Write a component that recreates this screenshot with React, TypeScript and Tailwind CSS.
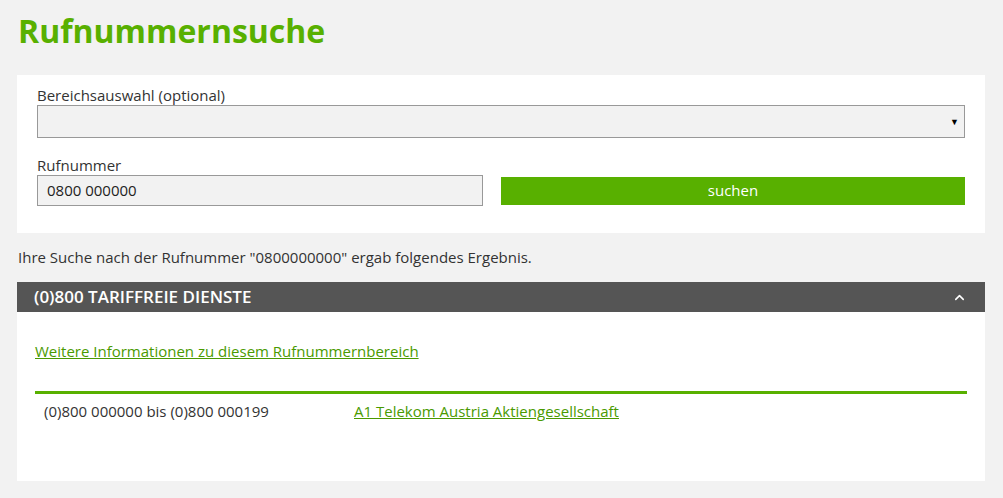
import { ChevronUp } from 'lucide-react';

const App = () => {
  return (
    <div className="min-h-screen bg-[#f2f2f2] text-[#333] font-['Open_Sans',sans-serif] text-[15px]">
      <div className="w-[968px] ml-[17px] pt-[9px]">
        <h1 className="text-[32px] font-bold text-[#58b000] leading-[44px] pl-px">
          Rufnummernsuche
        </h1>

        <div className="mt-[22px] bg-white px-5 pt-[10px] pb-[27px]">
          <label className="block leading-5">Bereichsauswahl (optional)</label>
          <div className="relative h-[33px] border border-[#999] bg-[#f2f2f2]">
            <span className="absolute right-[5px] top-[9px] text-[9px] text-black">▼</span>
          </div>

          <label className="block mt-[17px] leading-5">Rufnummer</label>
          <div className="flex items-center gap-[18px]">
            <div className="w-[446px] h-[31px] border border-[#999] bg-[#f2f2f2] flex items-center px-[9px] text-[#222]">
              0800 000000
            </div>
            <button className="flex-1 h-[28px] bg-[#58b000] text-white">suchen</button>
          </div>
        </div>

        <p className="mt-[14px] pl-px leading-5">
          Ihre Suche nach der Rufnummer "0800000000" ergab folgendes Ergebnis.
        </p>

        <div className="mt-[15px] h-[30px] bg-[#555] text-white flex items-center justify-between pl-[17px] pr-[18px]">
          <span className="font-semibold text-[17px]">(0)800 TARIFFREIE DIENSTE</span>
          <ChevronUp className="w-[15px] h-[15px]" strokeWidth={2.5} />
        </div>

        <div className="bg-white h-[169px] px-[18px] pt-[29px] leading-5">
          <div>
            <a href="#" className="text-[#4a9a00] underline">
              Weitere Informationen zu diesem Rufnummernbereich
            </a>
          </div>
          <div className="mt-[30px] border-t-[3px] border-[#58b000] flex pt-[7px] pl-[9px]">
            <span className="w-[310px]">(0)800 000000 bis (0)800 000199</span>
            <a href="#" className="text-[#4a9a00] underline">A1 Telekom Austria Aktiengesellschaft</a>
          </div>
        </div>
      </div>
    </div>
  );
};

export default App;
